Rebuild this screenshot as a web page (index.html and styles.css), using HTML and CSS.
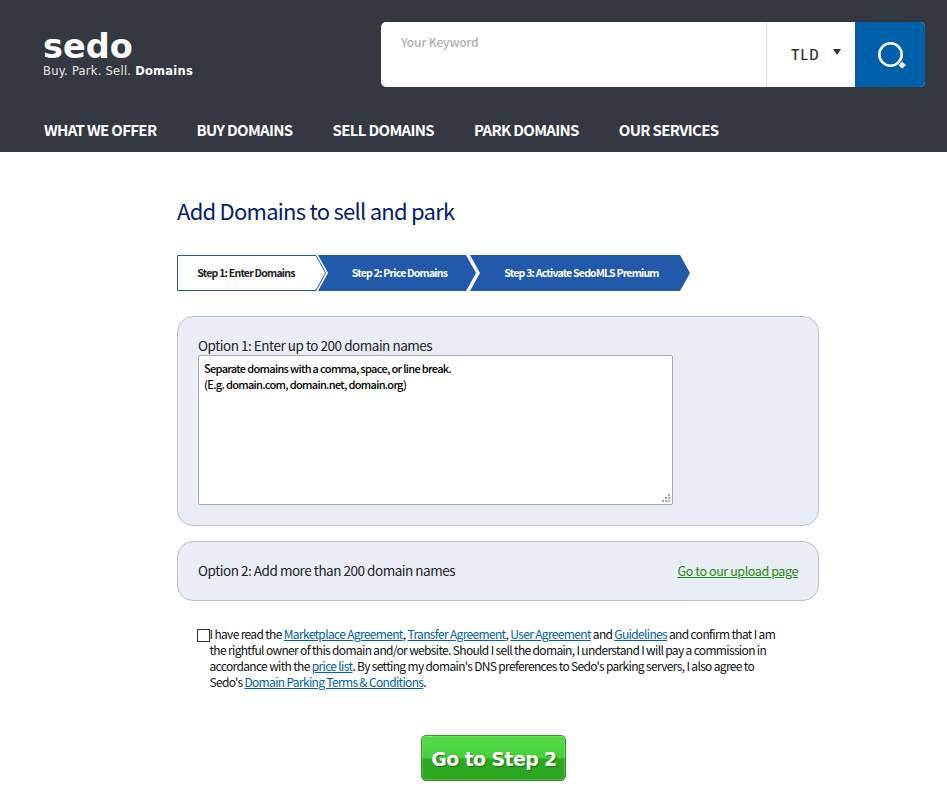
FILE: index.html
```html
<!DOCTYPE html>
<html lang="en">
<head>
<meta charset="utf-8">
<title>Add Domains</title>
<link rel="stylesheet" href="styles.css">
</head>
<body>
<header class="header">
  <div class="top">
    <div class="logo">
      <div class="logo-name">sedo</div>
      <div class="logo-tag">Buy. Park. Sell. <b>Domains</b></div>
    </div>
    <form class="search">
      <div class="keyword">Your Keyword</div>
      <div class="tld"><span>TLD</span><i class="caret"></i></div>
      <div class="go">
        <svg width="32" height="30" viewBox="0 0 32 30"><circle cx="16.500" cy="14.500" r="11.200" fill="none" stroke="#fff" stroke-width="2.600"/><path d="M28.200 21.500l3.600 3.600-3.600 3.600-3.600-3.600z" fill="#fff"/></svg>
      </div>
    </form>
  </div>
  <nav class="nav">
    <a>WHAT WE OFFER</a><a>BUY DOMAINS</a><a>SELL DOMAINS</a><a>PARK DOMAINS</a><a>OUR SERVICES</a>
  </nav>
</header>
<main class="main">
  <h1 class="title">Add Domains to sell and park</h1>
  <div class="steps">
    <svg class="steps-bg" width="514" height="36" viewBox="0 0 514 36">
      <path d="M.5.5H139l9.500 17.500L139 35.500H.5z" fill="#fff" stroke="#2159ab"/>
      <path d="M141 0H289l10 18-10 18H141l10-18z" fill="#2159ab"/>
      <path d="M293 0H503l10 18-10 18H293l10-18z" fill="#2159ab"/>
    </svg>
    <div class="step step-1">Step 1: Enter Domains</div>
    <div class="step step-2">Step 2: Price Domains</div>
    <div class="step step-3">Step 3: Activate SedoMLS Premium</div>
  </div>
  <section class="panel panel-one">
    <div class="option">Option 1: Enter up to 200 domain names</div>
    <div class="area">
      <div>Separate domains with a comma, space, or line break.</div>
      <div>(E.g. domain.com, domain.net, domain.org)</div>
      <svg class="grip" width="9" height="9" viewBox="0 0 9 9" fill="#aaa"><rect x="6" y="0" width="2" height="2"/><rect x="3" y="3" width="2" height="2"/><rect x="6" y="3" width="2" height="2"/><rect x="0" y="6" width="2" height="2"/><rect x="3" y="6" width="2" height="2"/><rect x="6" y="6" width="2" height="2"/></svg>
    </div>
  </section>
  <section class="panel panel-two">
    <div class="option">Option 2: Add more than 200 domain names</div>
    <a class="upload">Go to our upload page</a>
  </section>
  <div class="terms">
    <span class="check"></span>
    <p>I have read the <a>Marketplace Agreement</a>, <a>Transfer Agreement</a>, <a>User Agreement</a> and <a>Guidelines</a> and confirm that I am the rightful owner of this domain and/or website. Should I sell the domain, I understand I will pay a commission in accordance with the <a>price list</a>. By setting my domain's DNS preferences to Sedo's parking servers, I also agree to Sedo's <a>Domain Parking Terms &amp; Conditions</a>.</p>
  </div>
  <div class="action"><button class="next" type="button">Go to Step 2</button></div>
</main>
</body>
</html>
```
FILE: styles.css
```css
* { box-sizing: border-box; }
html, body { margin: 0; padding: 0; }
body {
  background: #fff;
  font-family: "Noto Sans CJK JP", "Noto Sans", sans-serif;
  color: #222;
  height: 807px;
  overflow: hidden;
}
.header { background: #343840; height: 152px; padding: 22px 22px 0 43px; }
.top { display: flex; justify-content: space-between; height: 65px; }
.logo { font-family: "DejaVu Sans", sans-serif; color: #fff; padding-top: 8px; }
.logo-name { font-size: 33.500px; font-weight: 700; line-height: 34px; }
.logo-tag { font-size: 11.500px; line-height: 14px; letter-spacing: .25px; color: #e8e8e8; }
.logo-tag b { color: #fff; }
.search { display: flex; width: 544px; height: 65px; background: #fff; border-radius: 5px; overflow: hidden; }
.keyword { flex: 1; padding: 11px 20px; font-size: 12px; line-height: 18px; color: #b0b0b0; font-weight: 500; letter-spacing: -.15px; }
.tld { width: 89px; border-left: 1px solid #ddd; padding: 0 0 2px 24px; display: flex; align-items: center; font-size: 14px; font-weight: 500; letter-spacing: .8px; color: #333; }
.caret { width: 0; height: 0; margin: -4px 0 0 13px; border: 4px solid transparent; border-top: 6px solid #333; border-bottom: 0; }
.go { width: 70px; background: #0060a9; display: flex; align-items: center; justify-content: center; }
.nav { display: flex; gap: 40px; margin: 33px 0 0 1px; }
.nav a { color: #fff; font-size: 15px; line-height: 20px; font-weight: 700; letter-spacing: -.675px; }
.main { width: 642px; margin-left: 177px; }
.title { margin: 44px 0 0; font-size: 22px; line-height: 28px; font-weight: 400; color: #012169; letter-spacing: -.75px; }
.steps { position: relative; display: flex; margin-top: 31px; height: 36px; width: 514px; }
.steps-bg { position: absolute; left: 0; top: 0; }
.step { position: relative; display: flex; align-items: center; justify-content: center; font-size: 10.500px; font-weight: 700; letter-spacing: -.78px; padding-bottom: 2px; }
.step-1 { width: 141px; padding-right: 3px; color: #222; }
.step-2 { width: 157px; padding-left: 6px; color: #fff; }
.step-3 { width: 216px; padding-right: 3px; color: #fff; }
.panel { background: #e9eef6; border: 1px solid #bcc0c8; border-radius: 16px; }
.panel-one { margin-top: 25px; height: 210px; padding: 19px 20px 0; }
.panel-one .area { margin-top: 1px; }
.option { font-size: 13.500px; line-height: 18px; color: #222; letter-spacing: -.48px; }
.area { position: relative; width: 475px; height: 150px; background: #fff; border: 1px solid #aaa; border-radius: 2px; padding: 4px 5px; font-size: 11px; font-weight: 500; line-height: 16px; color: #000; letter-spacing: -.67px; }
.grip { position: absolute; right: 1px; bottom: 1px; }
.panel-two { margin-top: 15px; height: 60px; padding: 0 20px 2px; display: flex; align-items: center; justify-content: space-between; }
.upload { font-size: 12.500px; color: #1f8a0c; text-decoration: underline; letter-spacing: -.4px; }
.terms { position: relative; display: flex; margin: 25px 0 0 20px; width: 585px; }
.check { flex: none; width: 13px; height: 13px; margin-top: 3px; border: 1px solid #333; background: #fff; }
.terms p { margin: 0 0 0 -.5px; font-size: 12px; line-height: 16px; color: #111; letter-spacing: -.66px; }
.terms a { color: #0060a9; text-decoration: underline; }
.action { display: flex; justify-content: center; margin: 45px 0 0 -10px; }
.next {
  width: 145px; height: 46px; padding: 1px 0 0 2px;
  font-family: "DejaVu Sans", sans-serif; font-size: 19px; font-weight: 700; color: #fff; letter-spacing: -.65px;
  text-shadow: 1px 1px 1px #1b6b10;
  background: linear-gradient(#53de46 0, #46cf3a 50%, #2eaa22 52%, #2aa61f 100%);
  border: 1px solid #2a9a20; border-radius: 5px;
  box-shadow: inset 0 0 0 1px rgba(255,255,255,.2);
}
```
